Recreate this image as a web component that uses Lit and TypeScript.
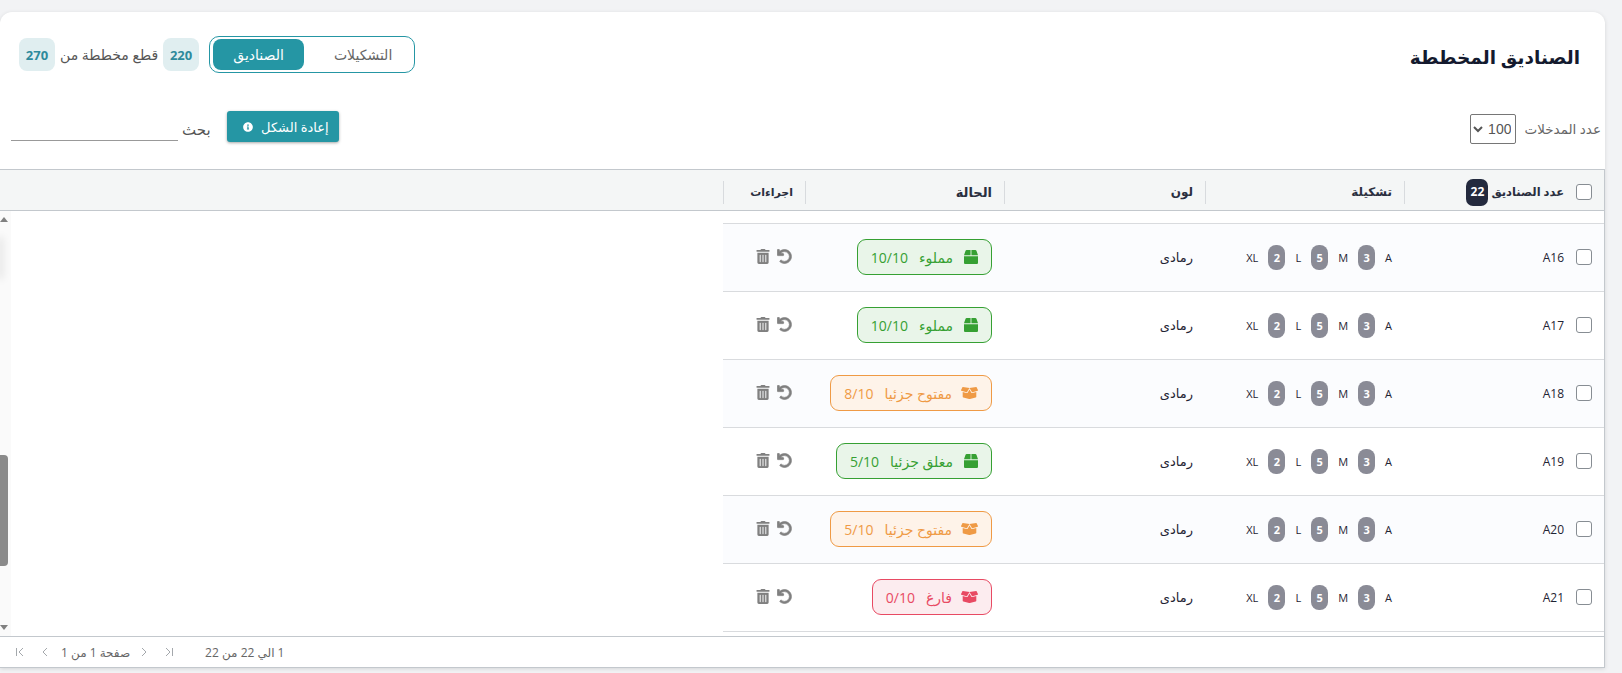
import { LitElement, html, css, svg } from "lit";
import { customElement } from "lit/decorators.js";

const BOX = svg`<path d="M509.5 184.6L458.9 32.8C452.4 13.2 434.1 0 413.4 0H272v192h238.7c-.4-2.5-.4-5-1.2-7.4zM240 0H98.6c-20.7 0-39 13.2-45.5 32.8L2.5 184.6c-.8 2.4-.8 4.9-1.2 7.4H240V0zM0 224v240c0 26.5 21.5 48 48 48h416c26.5 0 48-21.5 48-48V224H0z"/>`;
const BOX_OPEN = svg`<path d="M425.7 256c-16.9 0-32.8-9-41.4-23.4L320 126l-64.2 106.6c-8.7 14.5-24.6 23.5-41.5 23.5-4.5 0-9-.6-13.3-1.9L64 215v178c0 14.7 10 27.5 24.2 31l216.2 54.1c10.2 2.5 20.9 2.5 31 0L551.8 424c14.2-3.6 24.2-16.4 24.2-31V215l-137 39.1c-4.3 1.3-8.8 1.9-13.3 1.9zm212.6-112.2L586.8 41c-3.1-6.2-9.8-9.8-16.7-8.9L320 64l91.7 152.1c3.8 6.3 11.4 9.3 18.5 7.3l197.9-56.5c9.9-2.9 14.7-13.9 10.2-23.1zM53.2 41L1.7 143.8c-4.6 9.2.3 20.2 10.1 23l197.9 56.5c7.1 2 14.7-1 18.5-7.3L320 64 69.8 32.1c-6.9-.8-13.5 2.7-16.6 8.9z"/>`;
const UNDO = svg`<path d="M212.333 224.333H12c-6.627 0-12-5.373-12-12V12C0 5.373 5.373 0 12 0h48c6.627 0 12 5.373 12 12v78.112C117.773 39.279 184.26 7.47 258.175 8.007c136.906.994 246.448 111.623 246.157 248.532C504.041 393.258 393.12 504 256.333 504c-64.089 0-122.496-24.313-166.51-64.215-5.099-4.622-5.334-12.554-.467-17.42l33.967-33.967c4.474-4.474 11.662-4.717 16.401-.525C170.76 415.336 211.58 432 256.333 432c97.268 0 176-78.716 176-176 0-97.267-78.716-176-176-176-58.496 0-110.28 28.476-142.274 72.333h98.274c6.627 0 12 5.373 12 12v48c0 6.627-5.373 12-12 12z"/>`;
const TRASH = svg`<path d="M32 464a48 48 0 0 0 48 48h288a48 48 0 0 0 48-48V128H32zm272-256a16 16 0 0 1 32 0v224a16 16 0 0 1-32 0zm-96 0a16 16 0 0 1 32 0v224a16 16 0 0 1-32 0zm-96 0a16 16 0 0 1 32 0v224a16 16 0 0 1-32 0zM432 32H312l-9.4-18.7A24 24 0 0 0 281.1 0H166.8a23.72 23.72 0 0 0-21.4 13.3L136 32H16A16 16 0 0 0 0 48v32a16 16 0 0 0 16 16h416a16 16 0 0 0 16-16V48a16 16 0 0 0-16-16z"/>`;
const INFO = svg`<path d="M256 8C119.043 8 8 119.083 8 256c0 136.997 111.043 248 248 248s248-111.003 248-248C504 119.083 392.957 8 256 8zm0 110c23.196 0 42 18.804 42 42s-18.804 42-42 42-42-18.804-42-42 18.804-42 42-42zm56 254c0 6.627-5.373 12-12 12h-88c-6.627 0-12-5.373-12-12v-24c0-6.627 5.373-12 12-12h12v-64h-12c-6.627 0-12-5.373-12-12v-24c0-6.627 5.373-12 12-12h64c6.627 0 12 5.373 12 12v100h12c6.627 0 12 5.373 12 12v24z"/>`;

type Kind = "full" | "open" | "empty";
interface Row { id: string; label: string; count: string; kind: Kind; open: boolean }

const ROWS: Row[] = [
  { id: "A16", label: "مملوء", count: "10/10", kind: "full", open: false },
  { id: "A17", label: "مملوء", count: "10/10", kind: "full", open: false },
  { id: "A18", label: "مفتوح جزئيا", count: "8/10", kind: "open", open: true },
  { id: "A19", label: "مغلق جزئيا", count: "5/10", kind: "full", open: false },
  { id: "A20", label: "مفتوح جزئيا", count: "5/10", kind: "open", open: true },
  { id: "A21", label: "فارغ", count: "0/10", kind: "empty", open: true },
];

@customElement("app-root")
export class AppRoot extends LitElement {
  static styles = css`
    :host {
      display: block;
      height: 673px;
      overflow: hidden;
      box-sizing: border-box;
      padding: 12px 17px 0 0;
      background: #f2f3f5;
      direction: rtl;
      font-family: "Open Sans", "Noto Sans", "DejaVu Sans", sans-serif;
      color: #1f2433;
    }
    .card {
      height: 656px;
      background: #fff;
      border-radius: 12px 12px 0 0;
      box-shadow: 0 1px 4px rgba(0, 0, 0, 0.12);
      display: flex;
      flex-direction: column;
      overflow: hidden;
    }
    .top {
      display: flex;
      justify-content: space-between;
      align-items: flex-start;
      padding: 24px 25px 0 19px;
      height: 37px;
    }
    h1 {
      margin: 0;
      padding-top: 7px;
      font-size: 18.5px;
      line-height: 28px;
      font-weight: 700;
      color: #141a2e;
    }
    .top-left { display: flex; align-items: center; gap: 10px; }
    .seg {
      box-sizing: border-box;
      width: 206px;
      height: 37px;
      border: 1px solid #2596a4;
      border-radius: 10px;
      padding: 2px;
      display: flex;
      font-size: 14px;
    }
    .seg div { display: flex; align-items: center; justify-content: center; }
    .seg .off { flex: 1; color: #666; padding-left: 10px; }
    .seg .on { width: 91px; background: #2596a4; color: #fff; border-radius: 8px; margin-left: 1px; }
    .stats { display: flex; align-items: center; gap: 5px; font-size: 14px; color: #555; }
    .stat {
      width: 36px;
      height: 33px;
      display: flex;
      align-items: center;
      justify-content: center;
      background: #e0eef0;
      border-radius: 8px;
      color: #2e8a9c;
      font-weight: 700;
      font-size: 13px;
    }
    .tools {
      display: flex;
      justify-content: space-between;
      align-items: center;
      margin-top: 38px;
      height: 33px;
      padding: 0 4px 0 11px;
    }
    .entries { display: flex; align-items: center; gap: 8px; font-size: 13.5px; color: #666; padding-top: 3px; }
    select {
      box-sizing: border-box;
      width: 46px;
      height: 30px;
      background: #fff;
      border: 1px solid #767676;
      border-radius: 2px;
      font-family: "Liberation Sans", sans-serif;
      font-size: 14px;
      color: #555;
    }
    .tools-left { display: flex; align-items: flex-start; gap: 16px; height: 33px; }
    .reset {
      box-sizing: border-box;
      width: 112px;
      height: 31px;
      display: flex;
      align-items: center;
      gap: 8px;
      padding: 0 10px;
      border: 0;
      border-radius: 3px;
      background: #2596a4;
      color: #fff;
      font: inherit;
      font-size: 13px;
      box-shadow: 0 1px 3px rgba(0, 0, 0, 0.35);
    }
    .reset svg { width: 10px; height: 10px; fill: #fff; }
    .search { display: flex; align-items: flex-end; gap: 4px; font-size: 15px; color: #555; height: 30px; }
    .search span { margin-bottom: 2px; }
    .search input {
      width: 167px;
      height: 20px;
      box-sizing: border-box;
      border: 0;
      border-bottom: 1px solid #999;
      outline: 0;
      background: transparent;
    }
    .table {
      margin-top: 25px;
      flex: 1;
      display: flex;
      flex-direction: column;
      border-top: 1px solid #c3c8cd;
      border-right: 1px solid #c3c8cd;
      min-height: 0;
    }
    .grid {
      display: grid;
      grid-template-columns: 200px 199px 201px 199px 82px;
      width: 881px;
    }
    .head {
      height: 36px;
      padding-top: 4px;
      flex: none;
      background: #f4f6f6;
      border-bottom: 1px solid #c3c8cd;
      align-items: center;
      width: 100%;
      grid-template-columns: 200px 199px 201px 199px 82px 1fr;
      font-size: 12px;
      line-height: 18px;
      font-weight: 700;
      color: #2a2f3f;
    }
    .th {
      box-sizing: border-box;
      height: 23px;
      display: flex;
      align-items: center;
      padding-right: 12px;
      border-left: 1px solid #d8dbde;
    }
    .th.first { gap: 3px; font-size: 11.5px; }
    .th.first input { margin-left: 9px; }
    .th.state { font-size: 13px; }
    .th.actions { font-size: 11px; }
    .count {
      width: 22px;
      height: 27px;
      flex: none;
      display: flex;
      align-items: center;
      justify-content: center;
      border-radius: 7px;
      background: #232a3e;
      color: #fff;
      font-size: 12px;
    }
    input[type="checkbox"] {
      appearance: none;
      box-sizing: border-box;
      flex: none;
      width: 16px;
      height: 16px;
      margin: 0;
      background: #fff;
      border: 1px solid #878d93;
      border-radius: 3px;
    }
    .body { height: 425px; flex: none; display: flex; overflow: hidden; }
    .rows { width: 881px; flex: none; }
    .lead { box-sizing: border-box; height: 13px; border-bottom: 1px solid #d9dbde; }
    .row {
      box-sizing: border-box;
      height: 68px;
      padding-bottom: 1px;
      align-items: center;
      border-bottom: 1px solid #d9dbde;
      font-size: 12px;
    }
    .row:nth-child(even) { background: #fbfcfe; }
    .td { box-sizing: border-box; display: flex; align-items: center; padding-right: 12px; }
    .id { gap: 12px; }
    .color { font-size: 13px; }
    .sizes { gap: 10px; font-size: 11px; }
    .pill {
      width: 17px;
      height: 25px;
      display: flex;
      align-items: center;
      justify-content: center;
      background: #8a8b96;
      color: #fff;
      border-radius: 8px;
      font-weight: 700;
    }
    .chip {
      box-sizing: border-box;
      height: 36px;
      display: flex;
      align-items: center;
      gap: 11px;
      padding: 0 13px;
      border: 1px solid;
      border-radius: 9px;
      font-size: 14px;
    }
    .chip svg { width: 14px; height: 14px; fill: currentColor; }
    .chip svg.wide { width: 17px; margin-left: -2px; }
    .chip.full { color: #36a033; border-color: #36a033; background: #e9f5e9; }
    .chip.open { color: #ef9a45; border-color: #ef9a45; background: #fef3e9; }
    .chip.empty { color: #e84a63; border-color: #e84a63; background: #fcecef; }
    .acts { gap: 7px; padding-right: 13px; margin-top: -2px; }
    .acts svg { fill: #808080; height: 15px; }
    .acts .u { width: 15px; stroke: #808080; stroke-width: 28; }
    .acts .t { width: 14px; }
    .rest { flex: 1; display: flex; justify-content: flex-end; }
    .bar {
      position: relative;
      width: 11px;
      background: #fafafa;
      display: flex;
      flex-direction: column;
      align-items: flex-end;
    }
    .bar::before {
      content: "";
      position: absolute;
      left: 0;
      top: 28px;
      width: 0;
      height: 38px;
      box-shadow: 0 0 8px 2px rgba(0, 0, 0, 0.14);
    }
    .arrow { width: 8px; height: 5px; flex: none; margin: 6px 0; fill: #808080; display: block; align-self: flex-end; }
    .thumb { width: 8px; height: 111px; flex: none; background: #8a8a8a; border-radius: 0 4px 4px 0; margin-top: 227px; }
    .track { flex: 1; }
    .foot {
      flex: 1;
      display: flex;
      justify-content: flex-end;
      align-items: center;
      padding-left: 15px;
      border-top: 1px solid #c3c8cd;
      border-bottom: 1px solid #c3c8cd;
      font-size: 12px;
      color: #666;
      height: 32px;
    }
    .foot .range { margin-left: 31px; }
    .foot svg { width: 10px; height: 10px; fill: none; stroke: #a4a8ac; stroke-width: 1; display: block; }
    .pager { display: flex; align-items: center; }
    .pager .t { margin: 0 9px 0 11px; }
    .pager .near { margin-right: 15px; }
    .pager .far { margin-right: 15px; }
  `;

  private chip(r: Row) {
    return html`<div class="chip ${r.kind}">
      ${r.open
        ? html`<svg class="wide" viewBox="0 0 640 512">${BOX_OPEN}</svg>`
        : html`<svg viewBox="0 0 512 512">${BOX}</svg>`}
      <span>${r.label}</span>
      <span dir="ltr">${r.count}</span>
    </div>`;
  }

  private row(r: Row) {
    return html`<div class="grid row">
      <div class="td id"><input type="checkbox" /><span>${r.id}</span></div>
      <div class="td sizes">
        <span>A</span><span class="pill">3</span>
        <span>M</span><span class="pill">5</span>
        <span>L</span><span class="pill">2</span>
        <span>XL</span>
      </div>
      <div class="td color">رمادى</div>
      <div class="td">${this.chip(r)}</div>
      <div class="td acts">
        <svg class="u" viewBox="-14 -14 540 540">${UNDO}</svg>
        <svg class="t" viewBox="0 0 448 512">${TRASH}</svg>
      </div>
    </div>`;
  }

  render() {
    return html`<div class="card">
      <div class="top">
        <h1>الصناديق المخططة</h1>
        <div class="top-left">
          <div class="seg">
            <div class="off">التشكيلات</div>
            <div class="on">الصناديق</div>
          </div>
          <div class="stats">
            <span class="stat">220</span>
            <span>قطع مخططة من</span>
            <span class="stat">270</span>
          </div>
        </div>
      </div>
      <div class="tools">
        <label class="entries">
          <span>عدد المدخلات</span>
          <select><option>100</option></select>
        </label>
        <div class="tools-left">
          <button class="reset">
            <span>إعادة الشكل</span>
            <svg viewBox="0 0 512 512">${INFO}</svg>
          </button>
          <label class="search"><span>بحث</span><input type="text" /></label>
        </div>
      </div>
      <div class="table">
        <div class="grid head">
          <div class="th first">
            <input type="checkbox" /><span>عدد الصناديق</span><span class="count">22</span>
          </div>
          <div class="th">تشكيلة</div>
          <div class="th">لون</div>
          <div class="th state">الحالة</div>
          <div class="th actions">اجراءات</div>
          <div></div>
        </div>
        <div class="body">
          <div class="rows">
            <div class="lead"></div>
            ${ROWS.map((r) => this.row(r))}
          </div>
          <div class="rest">
            <div class="bar">
              <svg class="arrow" viewBox="0 0 8 5"><path d="M4 0l4 5H0z" /></svg>
              <div class="thumb"></div>
              <div class="track"></div>
              <svg class="arrow" viewBox="0 0 8 5"><path d="M0 0h8L4 5z" /></svg>
            </div>
          </div>
        </div>
        <div class="foot">
          <span class="range">1 الي 22 من 22</span>
          <div class="pager">
            <svg viewBox="0 0 10 10"><path d="M2 1l4 4-4 4M8.5 1v8" /></svg>
            <svg class="near" viewBox="0 0 10 10"><path d="M3 1l4 4-4 4" /></svg>
            <span class="t">صفحة 1 من 1</span>
            <svg viewBox="0 0 10 10"><path d="M7 1L3 5l4 4" /></svg>
            <svg class="far" viewBox="0 0 10 10"><path d="M8 1L4 5l4 4M1.5 1v8" /></svg>
          </div>
        </div>
      </div>
    </div>`;
  }
}
